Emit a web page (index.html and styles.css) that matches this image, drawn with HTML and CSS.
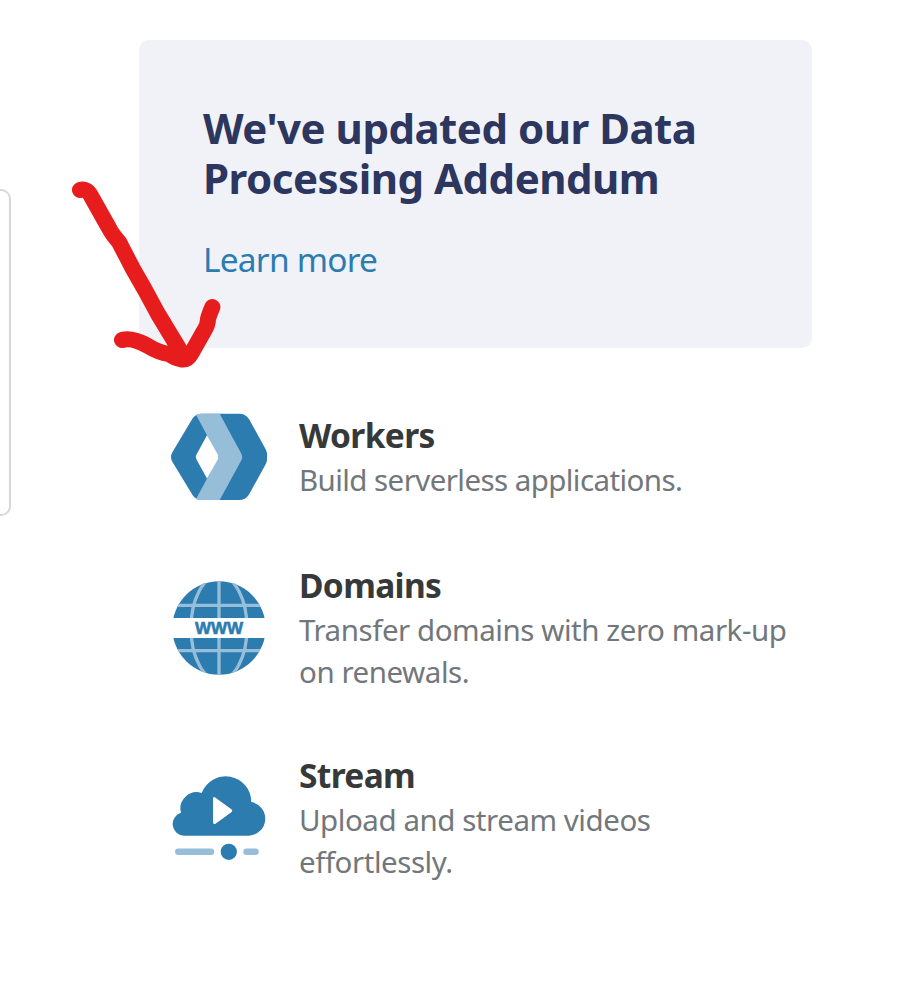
FILE: index.html
```
<!DOCTYPE html>
<html lang="en">
<head>
<meta charset="utf-8">
<title>Dashboard</title>
<link rel="stylesheet" href="styles.css">
</head>
<body>
<div class="page">
  <div class="panel-edge"></div>
  <main class="column">
    <section class="notice">
      <h2 class="notice-title">We've updated our Data<br>Processing Addendum</h2>
      <a class="notice-link">Learn more</a>
    </section>
    <section class="products">
      <article class="product">
        <svg class="icon" viewBox="0 0 96 96">
          <path class="blue" d="M31 4.700H68Q74.500 4.700 78 10L94.800 40.500Q98 48 94.800 55L78 85.500Q74.500 91 68 91H31Q24.500 91 21.500 86L1.500 53Q-1.500 48 1.500 43L21.500 9.500Q24.500 4.700 31 4.700Z"/>
          <path class="light" d="M25 5.800Q27 4.700 30 4.700H48.700L70.200 44.500Q72.200 48 70.200 51.500L48.700 91H30Q27 91 25 90L47.700 48Z"/>
          <path class="white" d="M36 26.300L46.800 45.500Q48.200 48 46.800 50.500L36 69.500L25.500 50.500Q24 48 25.500 45.500Z"/>
        </svg>
        <div class="copy"><h3 class="name">Workers</h3><p class="desc tight">Build serverless applications.</p></div>
      </article>
      <article class="product">
        <svg class="icon" viewBox="0 0 96 96">
          <clipPath id="globe"><circle cx="48" cy="49" r="46.700"/></clipPath>
          <g clip-path="url(#globe)">
            <path class="blue" d="M0 0H96V96H0Z"/>
            <path class="grid" d="M0 26.400H96M0 71.700H96M48 0V96"/>
            <ellipse class="grid" cx="48" cy="49" rx="28" ry="52.400"/>
          </g>
          <path class="white" d="M0 39H96V59H0Z"/>
          <text class="www" x="24" y="55" textLength="48">WWW</text>
        </svg>
        <div class="copy"><h3 class="name">Domains</h3><p class="desc">Transfer domains with zero mark-up<br>on renewals.</p></div>
      </article>
      <article class="product">
        <svg class="icon" viewBox="0 0 96 96">
          <path class="blue" d="M13 66.700A11.700 11.700 0 0 1 10 43.800A16.300 16.300 0 0 1 30.700 24A25.600 25.600 0 0 1 80.300 33A17 17 0 0 1 78 66.700Z"/>
          <path class="white" d="M42 30Q42 27 44.500 28.700L60 40Q62.500 41.700 60 43.400L44.500 54.700Q42 56 42 53Z"/>
          <path class="track" d="M7.300 82.800H40M75.500 82.800H84.500"/>
          <circle class="blue" cx="57.800" cy="82.800" r="8.100"/>
        </svg>
        <div class="copy"><h3 class="name">Stream</h3><p class="desc">Upload and stream videos<br>effortlessly.</p></div>
      </article>
    </section>
  </main>
  <svg class="arrow" viewBox="0 0 150 190"><path d="M8 10Q15 8 19 16L37 48Q40 54 47 62L61 89L73 110L86 134L109 172"/><path d="M50 160Q60 157 76 166C84 171 90 173 97 174Q103 178 108 179Q115 181 119 174L132 151Q136 145 136 139Q137 135 140.400 127"/></svg>
</div>
</body>
</html>
```
FILE: styles.css
```
* { box-sizing: border-box; margin: 0; }
body { background: #fff; font-family: "Noto Sans", sans-serif; }
.page { display: flex; position: relative; height: 986px; overflow: hidden; }
.panel-edge { width: 11px; height: 327px; margin-top: 189px; border: 2px solid #d5d7d8; border-left: 0; border-radius: 0 10px 10px 0; }
.column { width: 673px; margin: 40px 0 0 128px; }
.notice { height: 308px; padding: 63px 64px 0; border-radius: 10px; background: #f1f2f8; }
.notice-title { font-size: 42px; line-height: 50px; letter-spacing: -0.5px; color: #2c365e; white-space: nowrap; }
.notice-link { display: block; margin-top: 31px; font-size: 33.5px; line-height: 50px; letter-spacing: -0.8px; color: #2c7cb0; }
.products { display: flex; flex-direction: column; gap: 59px; padding: 63px 0 0 32px; }
.product { display: flex; align-items: flex-start; gap: 32px; }
.icon { width: 96px; height: 96px; margin: -2px 0 -3px; flex: none; align-self: center; }
.copy { margin: 1px 0 -1px; }
.name { font-size: 33.5px; line-height: 47px; letter-spacing: -0.65px; color: #36393a; }
.desc { font-size: 29.5px; line-height: 42px; letter-spacing: -0.45px; color: #72777b; white-space: nowrap; }
.tight { letter-spacing: -0.57px; }
.blue { fill: #2c7cb0; }
.light { fill: #97bed9; }
.white { fill: #fff; }
.grid { fill: none; stroke: #97bed9; stroke-width: 3.3px; }
.track { fill: none; stroke: #97bed9; stroke-width: 6.5px; stroke-linecap: round; }
.www { fill: #2c7cb0; stroke: #2c7cb0; stroke-width: 0.6px; font: bold 17px "Liberation Sans", sans-serif; }
.arrow { position: absolute; left: 72px; top: 180px; width: 150px; height: 190px; fill: none; stroke: #e71d1d; stroke-width: 16px; stroke-linecap: round; stroke-linejoin: round; }
```
